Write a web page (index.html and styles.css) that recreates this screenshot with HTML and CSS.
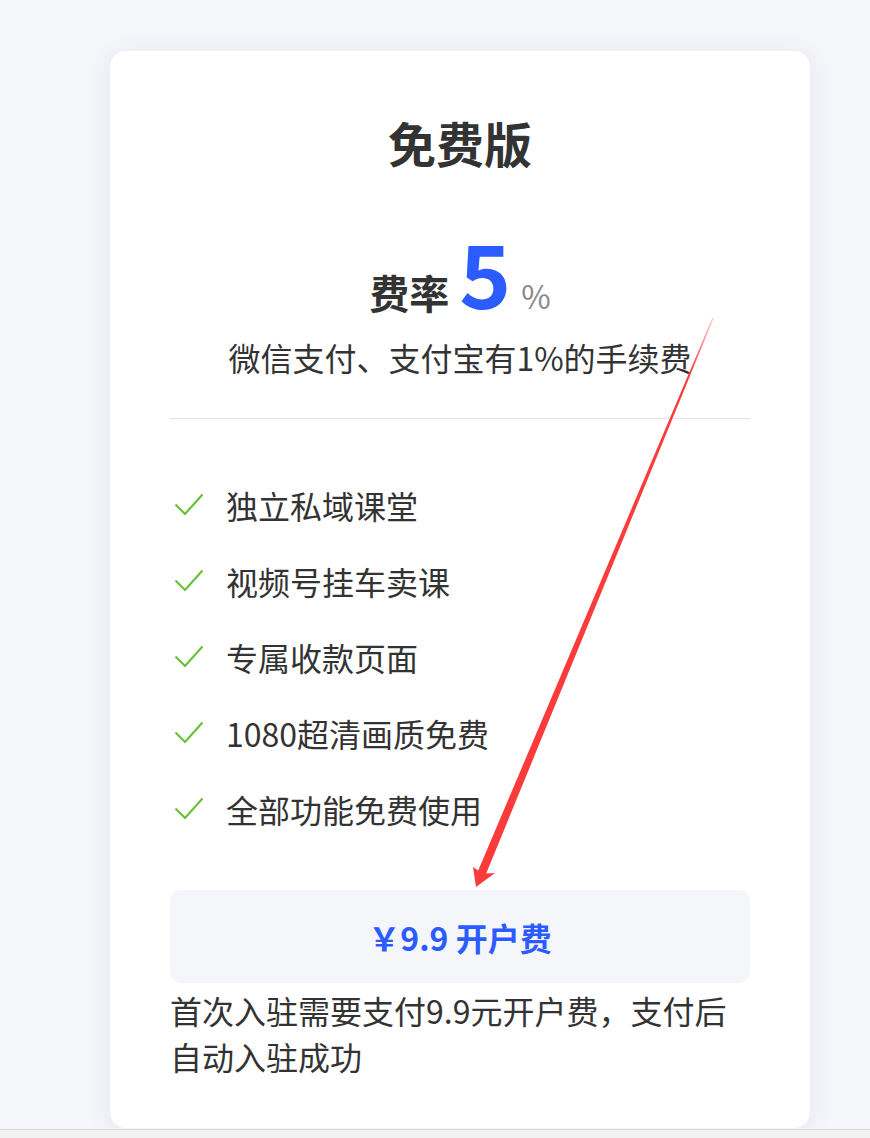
FILE: index.html
```html
<!DOCTYPE html>
<html>

<head>
    <title>免费版</title>
    <link rel="stylesheet" href="styles.css">
</head>

<body>
    <div class="page">
        <div class="card">
            <h1 class="plan-name">免费版</h1>

            <div class="rate">
                <span class="rate-label">费率</span>
                <span class="rate-value">5</span>
                <span class="rate-unit">%</span>
            </div>
            <p class="rate-note">微信支付、支付宝有1%的手续费</p>

            <hr class="divider">

            <ul class="features">
                <li class="feature">
                    <svg class="check" viewBox="0 0 30 30"><polyline points="1.5,14.5 11,24 28.5,4.5"></polyline></svg>
                    <span>独立私域课堂</span>
                </li>
                <li class="feature">
                    <svg class="check" viewBox="0 0 30 30"><polyline points="1.5,14.5 11,24 28.5,4.5"></polyline></svg>
                    <span>视频号挂车卖课</span>
                </li>
                <li class="feature">
                    <svg class="check" viewBox="0 0 30 30"><polyline points="1.5,14.5 11,24 28.5,4.5"></polyline></svg>
                    <span>专属收款页面</span>
                </li>
                <li class="feature">
                    <svg class="check" viewBox="0 0 30 30"><polyline points="1.5,14.5 11,24 28.5,4.5"></polyline></svg>
                    <span>1080超清画质免费</span>
                </li>
                <li class="feature">
                    <svg class="check" viewBox="0 0 30 30"><polyline points="1.5,14.5 11,24 28.5,4.5"></polyline></svg>
                    <span>全部功能免费使用</span>
                </li>
            </ul>

            <button type="button" class="open-btn">￥9.9 开户费</button>
            <p class="open-note">首次入驻需要支付9.9元开户费，支付后自动入驻成功</p>
        </div>
    </div>

    <!-- red annotation arrow drawn over the screenshot -->
    <svg class="annotation" width="870" height="1138" viewBox="0 0 870 1138">
        <defs>
            <linearGradient id="arrowFade" x1="713" y1="318" x2="476" y2="887" gradientUnits="userSpaceOnUse">
                <stop offset="0" stop-color="#ff4b4b" stop-opacity="0.3"></stop>
                <stop offset="0.1" stop-color="#fc3c3c"></stop>
                <stop offset="1" stop-color="#fb3a3a"></stop>
            </linearGradient>
        </defs>
        <polygon fill="url(#arrowFade)" points="712.4,317.8 713.6,318.2 486.2,873.6 495,873 476,887 473,867 478.2,870.6"></polygon>
    </svg>

    <div class="bottom-bar"></div>
</body>

</html>
```

FILE: styles.css
```css
body {
    margin: 0;
    background-color: #f5f6fa;
    font-family: "Noto Sans CJK SC", "Noto Sans", sans-serif;
    color: #333;
}

.page {
    padding: 51px 0 0 110px;
}

.card {
    width: 700px;
    box-sizing: border-box;
    padding: 59px 60px 49px;
    background-color: #fff;
    border-radius: 16px;
    box-shadow: 0 4px 24px rgba(30, 40, 90, 0.08);
}

.plan-name {
    margin: 0;
    font-size: 48px;
    line-height: 64px;
    font-weight: 700;
    text-align: center;
}

.rate {
    display: flex;
    justify-content: center;
    align-items: baseline;
    gap: 10px;
    margin-top: 53px;
    line-height: 1;
}

.rate-label {
    font-size: 40px;
    font-weight: 700;
}

.rate-value {
    font-size: 88px;
    font-weight: 700;
    color: #2c5cff;
}

.rate-unit {
    font-size: 32px;
    color: #8a8a8a;
}

.rate-note {
    margin: 20px 0 0;
    font-size: 32px;
    line-height: 44px;
    text-align: center;
}

.divider {
    margin: 39px 0 0;
    height: 0;
    border: 0;
    border-top: 1px solid #dfe3eb;
}

.features {
    list-style: none;
    margin: 48px 0 0;
    padding: 0;
}

.feature {
    display: flex;
    align-items: center;
    gap: 22px;
    height: 76px;
    padding-left: 4px;
    font-size: 32px;
}

.check {
    width: 30px;
    height: 30px;
    flex-shrink: 0;
}

.check polyline {
    fill: none;
    stroke: #67c23a;
    stroke-width: 2.2;
}

.open-btn {
    display: block;
    width: 100%;
    height: 93px;
    margin-top: 43px;
    border: 0;
    border-radius: 10px;
    background-color: #f5f6fa;
    font-family: inherit;
    font-size: 32px;
    font-weight: 600;
    color: #2c5cff;
    cursor: pointer;
}

.open-note {
    margin: 4px 0 0;
    font-size: 32px;
    line-height: 46px;
}

.annotation {
    position: absolute;
    top: 0;
    left: 0;
    pointer-events: none;
}

.bottom-bar {
    position: fixed;
    left: 0;
    right: 0;
    bottom: 0;
    height: 8px;
    background-color: #f2f2f2;
    border-top: 1px solid #d9d9d9;
}
```
